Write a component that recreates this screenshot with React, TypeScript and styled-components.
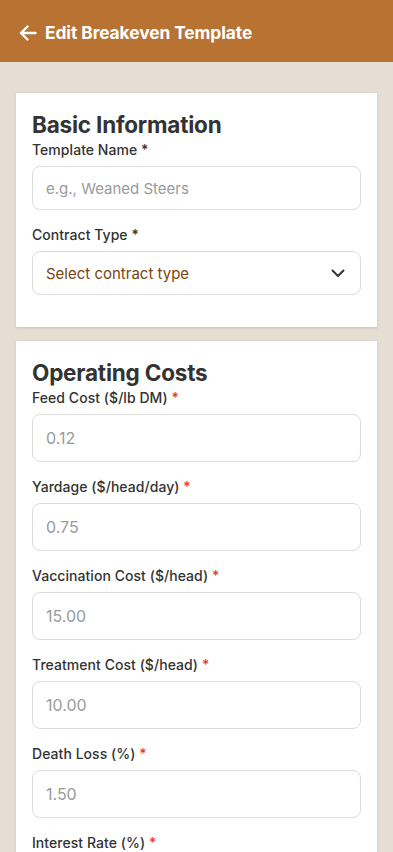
import React from "react";
import styled, { createGlobalStyle } from "styled-components";

const Global = createGlobalStyle`
  html, body { margin: 0; padding: 0; }
  body {
    background: #e6ddd3;
    font-family: Inter, "Noto Sans", "Liberation Sans", sans-serif;
    -webkit-font-smoothing: antialiased;
  }
  * { box-sizing: border-box; }
`;

const Page = styled.div`
  min-height: 852px;
  background: #e6ddd3;
`;

const Header = styled.header`
  height: 62px;
  background: #b87333;
  display: flex;
  align-items: center;
  padding: 3px 19px 0;
  gap: 8px;
  color: #fff;
`;

const Title = styled.h1`
  margin: 0;
  font-size: 17.4px;
  font-weight: 700;
  letter-spacing: -0.1px;
  line-height: 1;
`;

const Content = styled.main`
  padding: 31px 16px 0;
  display: flex;
  flex-direction: column;
  gap: 14px;
`;

const Card = styled.section`
  background: #fff;
  padding: 16px;
  box-shadow: 0 1px 3px rgba(0, 0, 0, 0.12);
`;

const CardTitle = styled.h2`
  margin: 0;
  font-size: 22.5px;
  font-weight: 700;
  color: #333;
  line-height: 31px;
  letter-spacing: -0.2px;
`;

const Field = styled.div`
  display: flex;
  flex-direction: column;
  gap: 6px;
  margin-bottom: 15px;
  &:last-child { margin-bottom: 16px; }
`;

const Label = styled.label`
  font-size: 14px;
  font-weight: 500;
  color: #333;
  line-height: 20px;
  letter-spacing: 0.05px;
`;

const Req = styled.span<{ $red?: boolean }>`
  color: ${(p) => (p.$red ? "#e53935" : "#333")};
`;

const Input = styled.input<{ $tall?: boolean }>`
  height: ${(p) => (p.$tall ? "48px" : "44px")};
  width: 100%;
  border: 1px solid #dcdcdc;
  border-radius: 8px;
  padding: 0 13px;
  font-family: inherit;
  font-size: ${(p) => (p.$tall ? "16px" : "15px")};
  color: #333;
  background: #fff;
  outline: none;
  &::placeholder { color: #9a9a9a; }
`;

const Select = styled.div`
  height: 44px;
  border: 1px solid #dcdcdc;
  border-radius: 8px;
  padding: 0 15px 0 13px;
  display: flex;
  align-items: center;
  justify-content: space-between;
  font-size: 15px;
  color: #7a4410;
`;

const Arrow = () => (
  <svg width="18" height="16" viewBox="0 0 18 16" fill="none">
    <path d="M2 8h14.5M2 8l6.5-6.5M2 8l6.5 6.5" stroke="#fff" strokeWidth="2.4" strokeLinecap="round" strokeLinejoin="round" />
  </svg>
);

const Chevron = () => (
  <svg width="14" height="9" viewBox="0 0 14 9" fill="none">
    <path d="M1.5 1.5L7 7l5.5-5.5" stroke="#333" strokeWidth="2" strokeLinecap="round" strokeLinejoin="round" />
  </svg>
);

const costs = [
  { label: "Feed Cost ($/lb DM)", ph: "0.12" },
  { label: "Yardage ($/head/day)", ph: "0.75" },
  { label: "Vaccination Cost ($/head)", ph: "15.00" },
  { label: "Treatment Cost ($/head)", ph: "10.00" },
  { label: "Death Loss (%)", ph: "1.50" },
  { label: "Interest Rate (%)", ph: "8.00" },
];

export default function App() {
  return (
    <Page>
      <Global />
      <Header>
        <Arrow />
        <Title>Edit Breakeven Template</Title>
      </Header>
      <Content>
        <Card>
          <CardTitle>Basic Information</CardTitle>
          <Field>
            <Label>Template Name <Req>*</Req></Label>
            <Input placeholder="e.g., Weaned Steers" />
          </Field>
          <Field>
            <Label>Contract Type <Req>*</Req></Label>
            <Select>
              <span>Select contract type</span>
              <Chevron />
            </Select>
          </Field>
        </Card>
        <Card>
          <CardTitle>Operating Costs</CardTitle>
          {costs.map((c) => (
            <Field key={c.label}>
              <Label>{c.label} <Req $red>*</Req></Label>
              <Input $tall placeholder={c.ph} />
            </Field>
          ))}
        </Card>
      </Content>
    </Page>
  );
}
